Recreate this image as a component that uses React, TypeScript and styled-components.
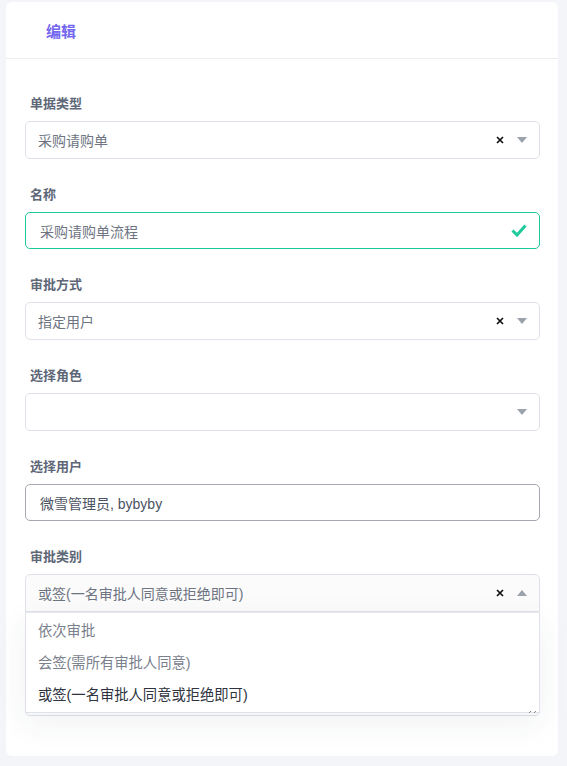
import React from "react";
import styled, { createGlobalStyle } from "styled-components";

const colors = {
  page: "#f4f5f9",
  primary: "#7367f0",
  label: "#5e6778",
  value: "#6e7482",
  border: "#dfe2e8",
  success: "#1ec99b",
  caret: "#9aa2ac",
};

const GlobalStyle = createGlobalStyle`
  body {
    margin: 0;
    background: ${colors.page};
    font-family: "Liberation Sans", "Noto Sans CJK SC", sans-serif;
  }
`;

const Page = styled.div`
  padding: 2px 9px 10px 6px;
`;

const Card = styled.div`
  background: #fff;
  border-radius: 6px;
`;

const CardHeader = styled.div`
  height: 56px;
  display: flex;
  align-items: center;
  padding-left: 40px;
  border-bottom: 1px solid #eceef3;
`;

const HeaderTitle = styled.span`
  color: ${colors.primary};
  font-size: 15px;
  font-weight: 600;
  font-family: "Noto Sans CJK SC", sans-serif;
`;

const CardBody = styled.div`
  padding: 34px 18px 40px 19px;
`;

const FormGroup = styled.div`
  position: relative;
  margin-bottom: 25px;
  &:last-child {
    margin-bottom: 0;
  }
`;

const Label = styled.div`
  height: 20px;
  line-height: 20px;
  margin: 0 0 8px 5px;
  font-size: 13px;
  font-weight: 600;
  color: ${colors.label};
  font-family: "Noto Sans CJK SC", sans-serif;
`;

const SelectBox = styled.div<{ $open?: boolean }>`
  height: 38px;
  box-sizing: border-box;
  display: flex;
  align-items: center;
  padding: 0 12px;
  border: 1px solid ${colors.border};
  border-radius: ${(p) => (p.$open ? "5px 5px 0 0" : "5px")};
  background: ${(p) => (p.$open ? "#fbfbfc" : "#fff")};
`;

const ValueText = styled.span`
  flex: 1;
  font-size: 14px;
  color: ${colors.value};
`;

const Controls = styled.div`
  display: flex;
  align-items: center;
  gap: 13px;
`;

const Caret = styled.span<{ $up?: boolean }>`
  width: 0;
  height: 0;
  border-left: 5.5px solid transparent;
  border-right: 5.5px solid transparent;
  ${(p) =>
    p.$up
      ? `border-bottom: 6px solid ${colors.caret};`
      : `border-top: 6px solid ${colors.caret};`}
`;

const TextInput = styled.div<{ $valid?: boolean }>`
  height: 37px;
  box-sizing: border-box;
  display: flex;
  align-items: center;
  padding: 0 12px 0 14px;
  border: 1px solid ${(p) => (p.$valid ? colors.success : "#a6a9b0")};
  border-radius: 5px;
  font-size: 14px;
  color: ${(p) => (p.$valid ? colors.value : "#4b5262")};
`;

const Textarea = styled.div`
  height: 49px;
  border: 1px solid ${colors.border};
  border-radius: 5px;
  position: relative;
`;

const ResizeGrip = styled.svg`
  position: absolute;
  right: 2px;
  bottom: 1px;
  z-index: 3;
`;

const Menu = styled.ul`
  position: absolute;
  left: 0;
  right: 0;
  top: 100%;
  margin: 0;
  padding: 2px 0 1px;
  list-style: none;
  background: #fff;
  border: 1px solid ${colors.border};
  border-top-color: #e6e8ed;
  box-shadow: 0 10px 30px rgba(40, 50, 80, 0.07);
  z-index: 2;
`;

const MenuItem = styled.li<{ $active?: boolean }>`
  height: 32px;
  line-height: 32px;
  padding-left: 12px;
  font-size: 14.3px;
  color: ${(p) => (p.$active ? "#2f3340" : "#7a808c")};
`;

const ClearIcon = () => (
  <svg width="8" height="8" viewBox="0 0 8 8">
    <path d="M1 1 L7 7 M7 1 L1 7" stroke="#111" strokeWidth="1.7" />
  </svg>
);

const CheckIcon = () => (
  <svg width="16" height="13" viewBox="0 0 16 13">
    <path
      d="M1.5 6.5 L6 11 L14.5 1.5"
      fill="none"
      stroke={colors.success}
      strokeWidth="3"
    />
  </svg>
);

interface SelectProps {
  label: string;
  value?: string;
  clearable?: boolean;
  open?: boolean;
  options?: string[];
}

const Select = ({ label, value, clearable, open, options }: SelectProps) => (
  <FormGroup>
    <Label>{label}</Label>
    <SelectBox $open={open}>
      <ValueText>{value}</ValueText>
      <Controls>
        {clearable && <ClearIcon />}
        <Caret $up={open} />
      </Controls>
    </SelectBox>
    {open && options && (
      <Menu>
        {options.map((o) => (
          <MenuItem key={o} $active={o === value}>
            {o}
          </MenuItem>
        ))}
      </Menu>
    )}
  </FormGroup>
);

const categories = [
  "依次审批",
  "会签(需所有审批人同意)",
  "或签(一名审批人同意或拒绝即可)",
];

export default function App() {
  return (
    <Page>
      <GlobalStyle />
      <Card>
        <CardHeader>
          <HeaderTitle>编辑</HeaderTitle>
        </CardHeader>
        <CardBody>
          <Select label="单据类型" value="采购请购单" clearable />
          <FormGroup>
            <Label>名称</Label>
            <TextInput $valid>
              <ValueText>采购请购单流程</ValueText>
              <CheckIcon />
            </TextInput>
          </FormGroup>
          <Select label="审批方式" value="指定用户" clearable />
          <Select label="选择角色" />
          <FormGroup>
            <Label>选择用户</Label>
            <TextInput>微雪管理员, bybyby</TextInput>
          </FormGroup>
          <Select
            label="审批类别"
            value="或签(一名审批人同意或拒绝即可)"
            clearable
            open
            options={categories}
          />
          <FormGroup>
            <Label>备注</Label>
            <Textarea>
              <ResizeGrip width="8" height="5" viewBox="0 0 8 5">
                <path d="M0 4 L2 2 M5 4 L7 2" stroke="#888" strokeWidth="1" />
              </ResizeGrip>
            </Textarea>
          </FormGroup>
        </CardBody>
      </Card>
    </Page>
  );
}
